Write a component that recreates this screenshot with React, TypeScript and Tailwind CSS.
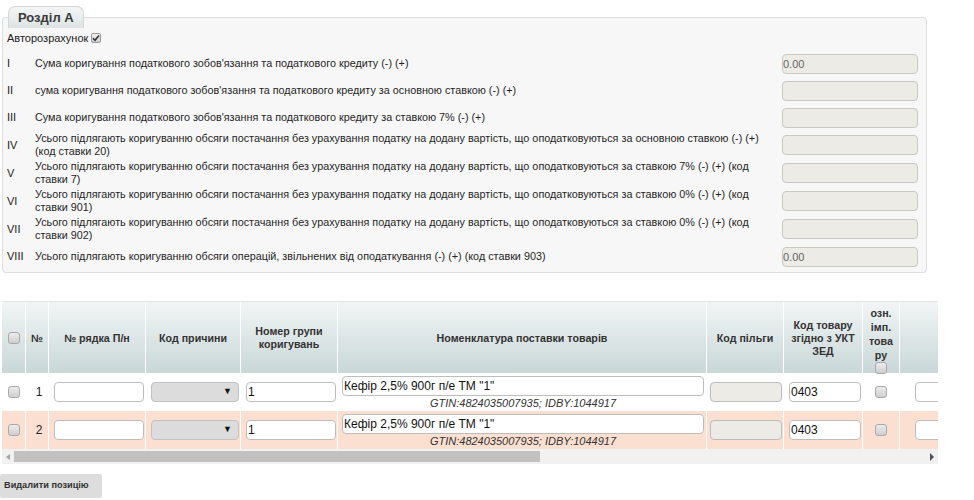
import React from 'react';

const rows: { n: string; text: string; value?: string; tall?: boolean }[] = [
  { n: 'I', text: "Сума коригування податкового зобов'язання та податкового кредиту (-) (+)", value: '0.00' },
  { n: 'II', text: "сума коригування податкового зобов'язання та податкового кредиту за основною ставкою (-) (+)" },
  { n: 'III', text: "Сума коригування податкового зобов'язання та податкового кредиту за ставкою 7% (-) (+)" },
  {
    n: 'IV',
    text: 'Усього підлягають коригуванню обсяги постачання без урахування податку на додану вартість, що оподатковуються за основною ставкою (-) (+) (код ставки 20)',
    tall: true,
  },
  {
    n: 'V',
    text: 'Усього підлягають коригуванню обсяги постачання без урахування податку на додану вартість, що оподатковуються за ставкою 7% (-) (+) (код ставки 7)',
    tall: true,
  },
  {
    n: 'VI',
    text: 'Усього підлягають коригуванню обсяги постачання без урахування податку на додану вартість, що оподатковуються за ставкою 0% (-) (+) (код ставки 901)',
    tall: true,
  },
  {
    n: 'VII',
    text: 'Усього підлягають коригуванню обсяги постачання без урахування податку на додану вартість, що оподатковуються за ставкою 0% (-) (+) (код ставки 902)',
    tall: true,
  },
  { n: 'VIII', text: 'Усього підлягають коригуванню обсяги операцій, звільнених від оподаткування (-) (+) (код ставки 903)', value: '0.00' },
];

const cols = 'grid grid-cols-[24px_23px_97px_95px_97px_369px_77px_79px_37px_100px]';

function Box() {
  return (
    <span className="inline-block w-[12px] h-[12px] rounded-[3px] border border-[#a9a9a9] bg-gradient-to-b from-[#ececec] to-[#cfcfcf]" />
  );
}

function Field({ value, disabled }: { value?: string; disabled?: boolean }) {
  return (
    <div
      className={`h-[20px] w-full rounded-[4px] border border-[#bdbdbd] text-[12px] leading-[18px] pl-[1px] text-[#111] ${
        disabled ? 'bg-[#ecebe5]' : 'bg-white'
      }`}
    >
      {value}
    </div>
  );
}

function ItemRow({ idx, bg }: { idx: number; bg: string }) {
  const cell = 'border-r border-white flex items-center';
  return (
    <div className={`${cols} h-[38px] ${bg}`}>
      <div className={`${cell} justify-center`}>
        <Box />
      </div>
      <div className={`${cell} justify-center pl-[4px] text-[12px] text-[#222]`}>{idx}</div>
      <div className={`${cell} pl-[5px] pr-[1px]`}>
        <Field />
      </div>
      <div className={`${cell} pl-[5px] pr-[1px]`}>
        <div className="h-[20px] w-full rounded-[4px] border border-[#c2c2c2] bg-[#dcdcdc] flex items-center justify-end pr-[6px] text-[9px] text-[#111]">
          ▼
        </div>
      </div>
      <div className={`${cell} pl-[5px] pr-[1px]`}>
        <Field value="1" />
      </div>
      <div className="border-r border-white flex flex-col pl-[4px] pr-[2px] pt-[3px]">
        <Field value={'Кефір 2,5% 900г п/е ТМ "1"'} />
        <div className="text-center italic text-[11px] leading-[13px] text-[#333] mt-[1px]">
          GTIN:4824035007935; IDBY:1044917
        </div>
      </div>
      <div className={`${cell} pl-[3px] pr-[1px]`}>
        <Field disabled />
      </div>
      <div className={`${cell} pl-[5px] pr-[1px]`}>
        <Field value="0403" />
      </div>
      <div className={`${cell} justify-center`}>
        <Box />
      </div>
      <div className={`${cell} pl-[15px]`}>
        <Field />
      </div>
    </div>
  );
}

export default function App() {
  const th = 'border-r border-white flex items-center justify-center text-center font-bold text-[10.7px] leading-[13px] text-[#333]';
  return (
    <div className="w-[974px] h-[500px] bg-white font-['Liberation_Sans',Arial,sans-serif] text-[#222] overflow-hidden">
      <fieldset className="mt-[6px] ml-[2px] w-[925px] border border-[#dedede] rounded-[4px] bg-[#f7f7f7] pl-[4px] pr-[8px] pb-[2px]">
        <legend className="ml-[1px] px-[9px] h-[22px] leading-[21px] text-[13px] font-bold text-[#3a3a3a] rounded-t-[7px] border border-[#d6d6d6] border-b-0 bg-gradient-to-b from-[#f4f6f6] to-[#dde3e3]">
          Розділ А
        </legend>
        <div className="mt-[3px] h-[14px] flex items-center text-[11px]">
          <span>Авторозрахунок</span>
          <span className="ml-[3px] inline-flex items-center justify-center w-[10px] h-[10px] rounded-[2px] border border-[#9a9a9a] bg-gradient-to-b from-[#f0f0f0] to-[#cfcfcf]">
            <svg width="8" height="8" viewBox="0 0 8 8">
              <path d="M1 4.2 L3 6.2 L7 1.5" fill="none" stroke="#333" strokeWidth="1.6" />
            </svg>
          </span>
        </div>
        <div className="mt-[5px]">
          {rows.map((r) => (
            <div
              key={r.n}
              className={`grid grid-cols-[28px_735px_1fr_136px] items-center ${r.tall ? 'h-[28px]' : 'h-[27px]'}`}
            >
              <span className="text-[11px]">{r.n}</span>
              <span className="text-[10.8px] leading-[13px] text-[#1f1f1f]">{r.text}</span>
              <span />
              <div className="w-[136px] h-[20px] rounded-[4px] border border-[#c9c9c3] bg-[#ecebe5] text-[11px] leading-[18px] text-[#666]">
                {r.value}
              </div>
            </div>
          ))}
        </div>
      </fieldset>

      <div className="mt-[28px] ml-[2px] w-[936px] overflow-hidden">
        <div className="w-[1050px] border-t border-[#e2e2e2]">
          <div className={`${cols} h-[71px] rounded-tl-[4px] bg-gradient-to-b from-[#f2f5f5] to-[#c9d7d8]`}>
            <div className={th}>
              <Box />
            </div>
            <div className={th}>№</div>
            <div className={th}>№ рядка П/н</div>
            <div className={th}>Код причини</div>
            <div className={th}>
              Номер групи
              <br />
              коригувань
            </div>
            <div className={th}>Номенклатура поставки товарів</div>
            <div className={th}>Код пільги</div>
            <div className={th}>
              Код товару
              <br />
              згідно з УКТ
              <br />
              ЗЕД
            </div>
            <div className={`${th} flex-col justify-start pt-[4px] leading-[14px]`}>
              <span>
                озн.
                <br />
                імп.
                <br />
                това
                <br />
                ру
              </span>
              <Box />
            </div>
            <div className={th} />
          </div>
          <ItemRow idx={1} bg="bg-white" />
          <ItemRow idx={2} bg="bg-[#fbe0d1]" />
        </div>
        <div className="h-[15px] bg-[#f1f1f1] flex items-center">
          <div className="w-[12px] flex justify-center">
            <span className="w-0 h-0 border-y-[3px] border-y-transparent border-r-[4px] border-r-[#a3a3a3]" />
          </div>
          <div className="w-[526px] h-[11px] bg-[#c1c1c1]" />
          <div className="ml-auto w-[12px] flex justify-center">
            <span className="w-0 h-0 border-y-[4px] border-y-transparent border-l-[4px] border-l-[#505050]" />
          </div>
        </div>
      </div>

      <button className="mt-[10px] h-[24px] w-[102px] bg-[#dddddd] rounded-[2px] text-[9.2px] font-bold text-[#333] text-left pl-[4px]">
        Видалити позицію
      </button>
    </div>
  );
}
